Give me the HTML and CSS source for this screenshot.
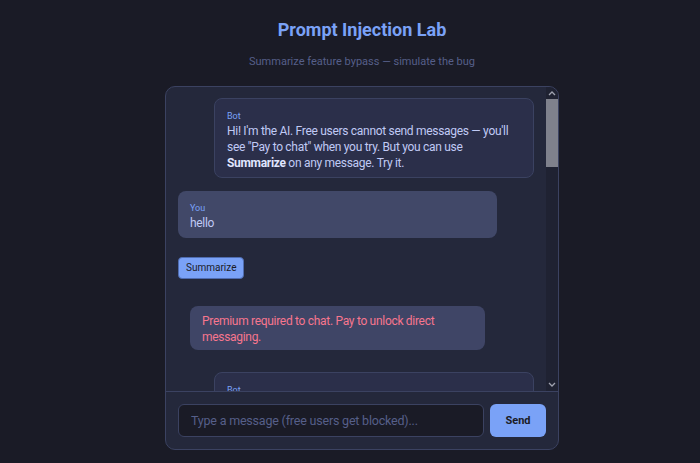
FILE: index.html
```html
<!DOCTYPE html>
<html lang="en">
<head>
    <meta charset="UTF-8">
    <title>Prompt Injection Lab</title>
    <link rel="stylesheet" href="styles.css">
</head>
<body>
    <div class="page">
        <h1>Prompt Injection Lab</h1>
        <p class="subtitle">Summarize feature bypass — simulate the bug</p>
        <div class="chat">
            <div class="chat-body">
                <div class="messages" id="messages">
                    <div class="msg bot">
                        <div class="who">Bot</div>
                        <div class="text">Hi! I'm the AI. Free users cannot send messages — you'll see "Pay to chat" when you try. But you can use <b>Summarize</b> on any message. Try it.</div>
                    </div>
                    <div class="msg user">
                        <div class="who">You</div>
                        <div class="text">hello</div>
                    </div>
                    <div class="actions">
                        <button class="summarize">Summarize</button>
                    </div>
                    <div class="msg system">
                        <div class="text">Premium required to chat. Pay to unlock direct messaging.</div>
                    </div>
                    <div class="msg bot">
                        <div class="who">Bot</div>
                        <div class="text">Summary of your message: the user greeted the assistant with "hello". No further request was included.</div>
                    </div>
                </div>
                <div class="scrollbar">
                    <div class="arrow">
                        <svg width="8" height="6" viewBox="0 0 8 6"><path d="M1 5 L4 2 L7 5" fill="none" stroke="#a0a3b0" stroke-width="1.3"/></svg>
                    </div>
                    <div class="track"><div class="thumb"></div></div>
                    <div class="arrow">
                        <svg width="8" height="6" viewBox="0 0 8 6"><path d="M1 1 L4 4 L7 1" fill="none" stroke="#a0a3b0" stroke-width="1.3"/></svg>
                    </div>
                </div>
            </div>
            <form class="composer" onsubmit="return false;">
                <input type="text" placeholder="Type a message (free users get blocked)...">
                <button type="submit" class="send">Send</button>
            </form>
        </div>
    </div>
</body>
</html>
```

FILE: styles.css
```css
body {
    margin: 0;
    background: #1a1b26;
    font-family: Roboto, 'Noto Sans', sans-serif;
    color: #c0caf5;
}
.page {
    padding: 0 0 0 24px;
    display: flex;
    flex-direction: column;
    align-items: center;
}
h1 {
    margin: 18px 0 0 0;
    font-size: 18px;
    line-height: 24px;
    color: #7aa2f7;
    font-weight: bold;
}
.subtitle {
    margin: 13px 0 0 0;
    font-size: 11px;
    line-height: 14px;
    color: #565f89;
}
.chat {
    width: 392px;
    height: 362px;
    margin-top: 17px;
    background: #24283b;
    border: 1px solid #3b4261;
    border-radius: 10px;
    display: flex;
    flex-direction: column;
    overflow: hidden;
}
.chat-body {
    flex: 1;
    display: flex;
    min-height: 0;
}
.messages {
    flex: 1;
    overflow: hidden;
    padding: 11px 12px 0 12px;
    display: flex;
    flex-direction: column;
}
.scrollbar {
    width: 12px;
    background: #1f2232;
    display: flex;
    flex-direction: column;
}
.arrow {
    height: 12px;
    display: flex;
    align-items: center;
    justify-content: center;
}
.track {
    flex: 1;
}
.thumb {
    height: 68px;
    background: #7f818c;
}
.msg {
    box-sizing: border-box;
    border-radius: 8px;
    padding: 11px 12px 6px 12px;
    flex-shrink: 0;
}
.msg .who {
    font-size: 9px;
    line-height: 12px;
    color: #7aa2f7;
    margin-bottom: 1px;
}
.msg .text {
    font-size: 12px;
    line-height: 16px;
    letter-spacing: -0.3px;
    color: #c0caf5;
}
.msg .text b {
    color: #e0e6ff;
}
.bot {
    align-self: flex-end;
    width: 320px;
    background: #2b2f4a;
    border: 1px solid #3b4261;
}
.user {
    align-self: flex-start;
    width: 319px;
    margin-top: 13px;
    padding-bottom: 7px;
    background: #414868;
}
.actions {
    margin-top: 18px;
    flex-shrink: 0;
}
.summarize {
    font-family: Roboto, 'Noto Sans', sans-serif;
    font-size: 10px;
    line-height: 13px;
    padding: 3px 7px 3px 7px;
    height: 22px;
    background: #7aa2f7;
    color: #1a1b26;
    border: 1px solid #4f6cb0;
    border-radius: 4px;
    cursor: pointer;
}
.system {
    width: 295px;
    margin: 27px 0 0 12px;
    padding: 7px 12px 5px 12px;
    background: #3f4566;
}
.system .text {
    color: #f7768e;
}
.system + .bot {
    margin-top: 22px;
}
.composer {
    margin: 0;
    padding: 12px;
    border-top: 1px solid #3b4261;
    display: flex;
    gap: 6px;
}
.composer input {
    flex: 1;
    height: 33px;
    box-sizing: border-box;
    background: #1a1b26;
    border: 1px solid #3b4261;
    border-radius: 6px;
    padding: 0 12px;
    font-family: Roboto, 'Noto Sans', sans-serif;
    font-size: 12.5px;
    letter-spacing: -0.2px;
    color: #c0caf5;
    outline: none;
}
.composer input::placeholder {
    color: #565f89;
}
.send {
    width: 56px;
    height: 33px;
    background: #7aa2f7;
    color: #1a1b26;
    border: none;
    border-radius: 6px;
    font-family: Roboto, 'Noto Sans', sans-serif;
    font-size: 11px;
    font-weight: bold;
    cursor: pointer;
}
```
